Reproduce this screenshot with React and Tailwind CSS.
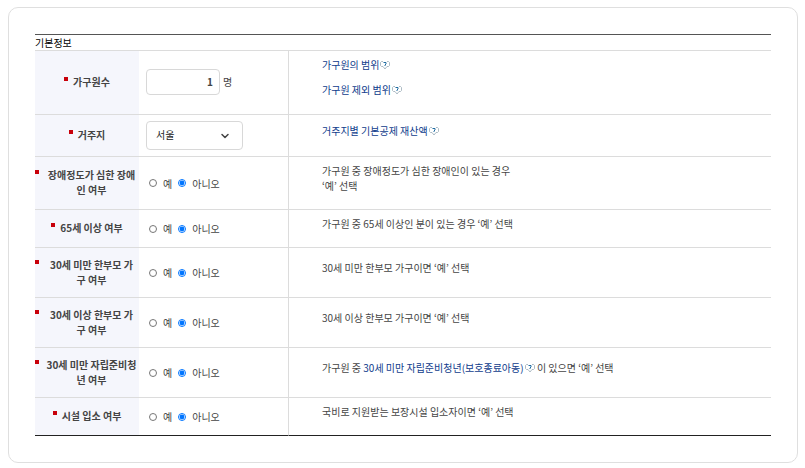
import React from "react";
import { ChevronDown } from "lucide-react";

const HelpIcon = () => (
  <svg
    viewBox="0 0 20 18"
    fill="none"
    className="ml-px inline-block h-[9px] w-[10px] align-[-1px]"
    aria-hidden="true"
  >
    <path
      d="M6 1H3L1 3v6l2 2h3l4 5 4-5h3l2-2V3l-2-2h-3"
      stroke="#93a6b1"
      strokeWidth="1.5"
    />
    <path d="M7 3h5v3l-2 2v2" stroke="#1d6aa0" strokeWidth="2" />
  </svg>
);

const HelpLink = ({ children }) => (
  <a href="#help" className="text-[#0f3c8c]">
    {children}
    <HelpIcon />
  </a>
);

const YesNo = ({ name, label }) => (
  <div
    role="radiogroup"
    aria-label={label}
    className="flex items-center gap-1.5 pl-[3px]"
  >
    <label className="flex items-center gap-1.5">
      <input type="radio" name={name} value="Y" className="size-2" />예
    </label>
    <label className="flex items-center gap-1.5">
      <input
        type="radio"
        name={name}
        value="N"
        defaultChecked
        className="size-2"
      />
      아니오
    </label>
  </div>
);

const Row = ({ id, label, wrap, height, last, control, children }) => {
  const line = last ? "border-b-[#222]" : "border-b-[#dcdcdc]";

  return (
    <tr>
      <th
        scope="row"
        className={`border-b bg-[#f5f6fc] px-0 pt-0 pb-0.5 font-bold text-[#444] ${height} ${line}`}
      >
        <label htmlFor={id} className="flex justify-center gap-[5px]">
          <span className="mt-[3px] size-1 shrink-0 bg-[#c8000a]" />
          <span
            className={`whitespace-pre-line text-center ${wrap ? "flex-1" : ""}`}
          >
            {label}
          </span>
        </label>
      </th>
      <td
        className={`border-r border-b border-r-[#dcdcdc] py-0 pr-0 pl-[7px] ${line}`}
      >
        {control || <YesNo name={label} label={label} />}
      </td>
      <td className={`border-b pt-0 pr-0 pb-[11px] pl-[33px] ${line}`}>
        {children}
      </td>
    </tr>
  );
};

const App = () => {
  return (
    <main className="mt-[7px] mr-[7px] ml-2 rounded-[10px] border border-[#dfdfdf] bg-white p-[26px] font-['Noto_Sans_CJK_KR',sans-serif] text-[10px] leading-[15px] text-[#444]">
      <table className="w-full table-fixed border-separate border-spacing-0 border-t border-[#dcdcdc]">
        <caption className="border-t border-[#555] text-left text-black">
          기본정보
        </caption>
        <colgroup>
          <col className="w-[104px]" />
          <col className="w-[150px]" />
          <col />
        </colgroup>
        <tbody>
          <Row
            id="members"
            label="가구원수"
            height="h-16"
            control={
              <div className="flex items-center gap-[3px] pb-0.5">
                <input
                  id="members"
                  type="text"
                  defaultValue="1"
                  className="h-[26px] w-[74px] rounded border border-[#d8d8d8] px-1.5 text-right font-bold"
                />
                <span>명</span>
              </div>
            }
          >
            <div className="flex flex-col items-start gap-[10px]">
              <HelpLink>가구원의 범위</HelpLink>
              <HelpLink>가구원 제외 범위</HelpLink>
            </div>
          </Row>
          <Row
            id="region"
            label="거주지"
            height="h-[42px]"
            control={
              <div className="relative w-[97px]">
                <select
                  id="region"
                  className="block h-[29px] w-full appearance-none rounded border border-[#d8d8d8] bg-white px-[9px] pb-0.5 text-[#222]"
                >
                  <option>서울</option>
                </select>
                <ChevronDown
                  className="pointer-events-none absolute top-[9px] right-3 size-3"
                  strokeWidth={3}
                />
              </div>
            }
          >
            <HelpLink>거주지별 기본공제 재산액</HelpLink>
          </Row>
          <Row label={"장애정도가 심한 장애\n인 여부"} wrap height="h-[53px]">
            가구원 중 장애정도가 심한 장애인이 있는 경우
            <br />
            ‘예’ 선택
          </Row>
          <Row label="65세 이상 여부" height="h-[38px]">
            가구원 중 65세 이상인 분이 있는 경우 ‘예’ 선택
          </Row>
          <Row label={"30세 미만 한부모 가\n구 여부"} wrap height="h-[50px]">
            30세 미만 한부모 가구이면 ‘예’ 선택
          </Row>
          <Row label={"30세 이상 한부모 가\n구 여부"} wrap height="h-[50px]">
            30세 이상 한부모 가구이면 ‘예’ 선택
          </Row>
          <Row label={"30세 미만 자립준비청\n년 여부"} wrap height="h-[50px]">
            가구원 중 <HelpLink>30세 미만 자립준비청년(보호종료아동)</HelpLink>{" "}
            이 있으면 ‘예’ 선택
          </Row>
          <Row label="시설 입소 여부" height="h-[38px]" last>
            국비로 지원받는 보장시설 입소자이면 ‘예’ 선택
          </Row>
        </tbody>
      </table>
    </main>
  );
};

export default App;
